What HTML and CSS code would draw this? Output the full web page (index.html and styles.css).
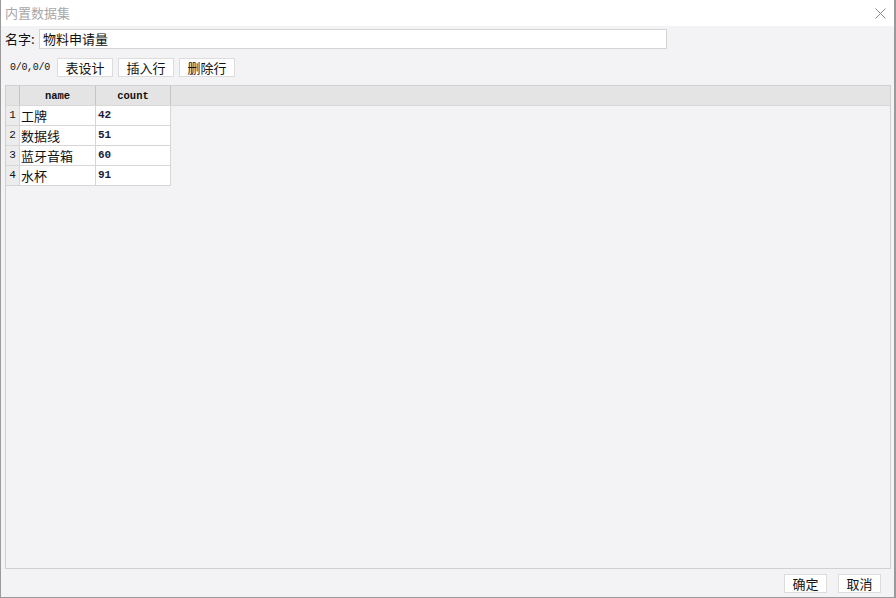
FILE: index.html
```html
<!DOCTYPE html>
<html>
<head>
<meta charset="utf-8">
<link rel="stylesheet" href="styles.css">
</head>
<body>
<div class="dialog">
  <div class="titlebar">
    <span class="title">内置数据集</span>
    <svg class="close" width="11" height="11" viewBox="0 0 11 11"><path d="M0.5 0.5L10.5 10.5M10.5 0.5L0.5 10.5" stroke="#8a8a8a" stroke-width="1" fill="none"/></svg>
  </div>
  <div class="body">
    <div class="namerow">
      <span class="label">名字:</span>
      <div class="input">物料申请量</div>
    </div>
    <div class="toolbar">
      <span class="pos">0/0,0/0</span>
      <button class="btn">表设计</button>
      <button class="btn">插入行</button>
      <button class="btn">删除行</button>
    </div>
    <div class="grid">
      <div class="hrow">
        <div class="hcorner"></div>
        <div class="hcell c1">name</div>
        <div class="hcell c2">count</div>
      </div>
      <div class="row"><div class="rn">1</div><div class="cell c1 txt">工牌</div><div class="cell c2 num">42</div></div>
      <div class="row"><div class="rn">2</div><div class="cell c1 txt">数据线</div><div class="cell c2 num">51</div></div>
      <div class="row"><div class="rn">3</div><div class="cell c1 txt">蓝牙音箱</div><div class="cell c2 num">60</div></div>
      <div class="row"><div class="rn">4</div><div class="cell c1 txt">水杯</div><div class="cell c2 num">91</div></div>
    </div>
    <div class="footer">
      <button class="btn fbtn">确定</button>
      <button class="btn fbtn">取消</button>
    </div>
  </div>
</div>
</body>
</html>
```
FILE: styles.css
```css
* { box-sizing: border-box; }
html, body { margin: 0; padding: 0; width: 896px; height: 598px; overflow: hidden; background: #f3f3f5; }
body { font-family: "Noto Sans CJK SC", "Liberation Sans", sans-serif; font-size: 13px; color: #111; }
.dialog {
  width: 896px; height: 598px;
  border-left: 1px solid #9a9a9a;
  border-right: 2px solid #9a9a9a;
  border-bottom: 1px solid #9a9a9a;
  display: flex; flex-direction: column;
  background: #f3f3f5;
}
.titlebar {
  height: 26px; background: #ffffff;
  display: flex; align-items: center; justify-content: space-between;
  padding: 0 8px 0 4px;
  flex: none;
}
.title { color: #a8a8a8; font-size: 13px; line-height: 26px; }
.close { display: block; margin-top: 1px; }
.body { flex: 1; display: flex; flex-direction: column; padding: 0 4px 0 4px; min-height: 0; }
.namerow { display: flex; align-items: center; height: 24px; margin-top: 1px; }
.label { width: 34px; font-size: 13px; line-height: 20px; padding-left: 0; }
.input {
  width: 628px; height: 20px; background: #fff; border: 1px solid #d4d4d4;
  padding-left: 3px; font-size: 13px; line-height: 18px;
}
.toolbar { display: flex; align-items: center; height: 20px; margin-top: 6px; }
.pos { font-family: "Liberation Mono", "DejaVu Sans Mono", monospace; font-size: 10px; color: #111; width: 52px; padding-left: 5px; padding-top: 1px; letter-spacing: -0.3px; }
.btn {
  font-family: "Noto Sans CJK SC", "Liberation Sans", sans-serif;
  font-size: 13px; color: #111; background: #fff; border: 1px solid #dcdcdc;
  height: 19px; width: 56px; padding: 0; line-height: 17px; margin: 0 5px 0 0;
}
.grid {
  margin-top: 8px; flex: 1; min-height: 0;
  border: 1px solid #d0d0d0; background: #f3f3f5;
  margin-right: 0; width: 886px;
}
.hrow { display: flex; height: 20px; background: #e4e4e4; border-bottom: 1px solid #d8d8d8; }
.hcorner { width: 14px; border-right: 1px solid #c4c4c4; }
.hcell {
  font-family: "Liberation Mono", "DejaVu Sans Mono", monospace; font-weight: bold; font-size: 10.5px;
  text-align: center; line-height: 20px; border-right: 1px solid #c4c4c4; color: #111;
}
.c1 { width: 76px; }
.c2 { width: 75px; }
.row { display: flex; height: 20px; }
.rn {
  width: 14px; background: #ececec; font-family: "Liberation Mono", "DejaVu Sans Mono", monospace;
  font-size: 11px; text-align: center; line-height: 19px; border-bottom: 1px solid #d6d6d6; border-right: 1px solid #d6d6d6; color: #111;
}
.cell { background: #fff; border-right: 1px solid #d6d6d6; border-bottom: 1px solid #d6d6d6; line-height: 19px; padding-left: 1px; }
.txt { font-size: 13px; }
.num { font-family: "Liberation Mono", "DejaVu Sans Mono", monospace; font-size: 11px; font-weight: bold; color: #1a1a3a; padding-left: 2px; }
.footer { display: flex; justify-content: flex-end; height: 28px; align-items: center; padding-right: 9px; }
.fbtn { width: 43px; margin: 0 0 0 11px; height: 19px; }
```
